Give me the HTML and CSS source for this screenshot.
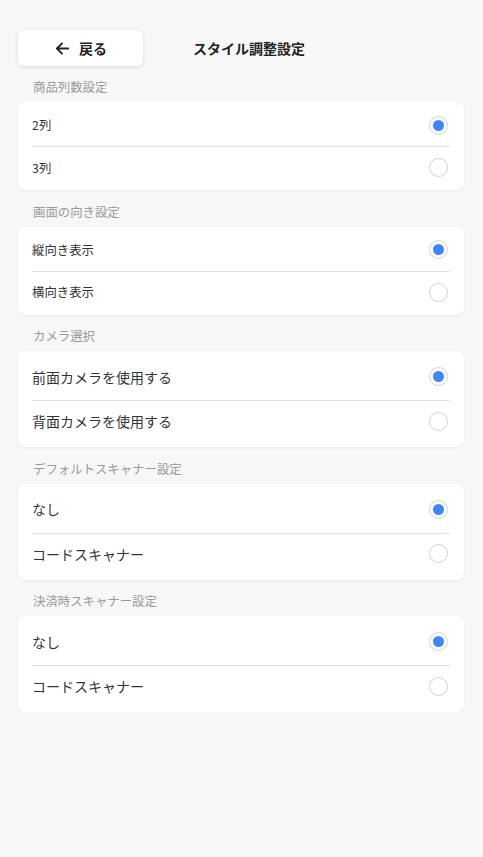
FILE: index.html
```html
<!DOCTYPE html>
<html lang="ja">
<head>
<meta charset="utf-8">
<link rel="stylesheet" href="styles.css">
</head>
<body>
<div class="page">
  <header class="header">
    <button class="back">
      <svg class="back-icon" width="15" height="15" viewBox="0 0 16 16"><path d="M14 8H2.5M7.5 2.5L2 8l5.5 5.5" fill="none" stroke="#222" stroke-width="2" stroke-linecap="round" stroke-linejoin="round"/></svg>
      <span>戻る</span>
    </button>
    <h1 class="title">スタイル調整設定</h1>
  </header>

  <section class="section">
    <div class="label">商品列数設定</div>
    <div class="card">
      <div class="row"><span>2列</span><span class="radio on"></span></div>
      <div class="row"><span>3列</span><span class="radio"></span></div>
    </div>
  </section>

  <section class="section">
    <div class="label">画面の向き設定</div>
    <div class="card">
      <div class="row"><span>縦向き表示</span><span class="radio on"></span></div>
      <div class="row"><span>横向き表示</span><span class="radio"></span></div>
    </div>
  </section>

  <section class="section">
    <div class="label">カメラ選択</div>
    <div class="card big">
      <div class="row"><span>前面カメラを使用する</span><span class="radio on"></span></div>
      <div class="row"><span>背面カメラを使用する</span><span class="radio"></span></div>
    </div>
  </section>

  <section class="section">
    <div class="label">デフォルトスキャナー設定</div>
    <div class="card big">
      <div class="row"><span>なし</span><span class="radio on"></span></div>
      <div class="row"><span>コードスキャナー</span><span class="radio"></span></div>
    </div>
  </section>

  <section class="section">
    <div class="label">決済時スキャナー設定</div>
    <div class="card big">
      <div class="row"><span>なし</span><span class="radio on"></span></div>
      <div class="row"><span>コードスキャナー</span><span class="radio"></span></div>
    </div>
  </section>
</div>
</body>
</html>
```

FILE: styles.css
```css
* { box-sizing: border-box; }
html, body {
  margin: 0;
  padding: 0;
  background: #f7f7f7;
  font-family: "Noto Sans CJK JP", "Noto Sans", sans-serif;
  color: #333;
}
.page {
  padding: 30px 19px 0 18px;
}
.header {
  display: flex;
  align-items: center;
  height: 36px;
}
.back {
  width: 125px;
  height: 36px;
  display: flex;
  align-items: center;
  gap: 9px;
  padding: 0 0 0 37px;
  border: none;
  border-radius: 6px;
  background: #fff;
  box-shadow: 0 1px 4px rgba(0,0,0,0.12);
  font-family: inherit;
  font-size: 14px;
  font-weight: 700;
  color: #222;
}
.back-icon { display: block; }
.title {
  margin: 0 0 0 50px;
  font-size: 14px;
  font-weight: 700;
  color: #222;
}
.section { margin-top: 12px; }
.section + .section { margin-top: 12.5px; }
.label {
  padding-left: 15px;
  font-size: 12.4px;
  line-height: 18px;
  color: #999;
  margin-bottom: 6px;
}
.card {
  background: #fff;
  border-radius: 8px;
  box-shadow: 0 1px 3px rgba(0,0,0,0.05);
  padding: 2px 14px;
}
.row {
  display: flex;
  align-items: center;
  justify-content: space-between;
  height: 42px;
  font-size: 12.4px;
  color: #333;
}
.row + .row { border-top: 1px solid #e3e3e3; }
.card.big .row { height: 47px; font-size: 14px; }
.card.big .row + .row { height: 45px; padding-bottom: 4px; }
.radio {
  width: 19px;
  height: 19px;
  border-radius: 50%;
  border: 1px solid #d2d2d2;
  margin-right: 2px;
  display: flex;
  align-items: center;
  justify-content: center;
}
.radio.on::after {
  content: "";
  width: 11px;
  height: 11px;
  border-radius: 50%;
  background: #3d86f5;
}
```
